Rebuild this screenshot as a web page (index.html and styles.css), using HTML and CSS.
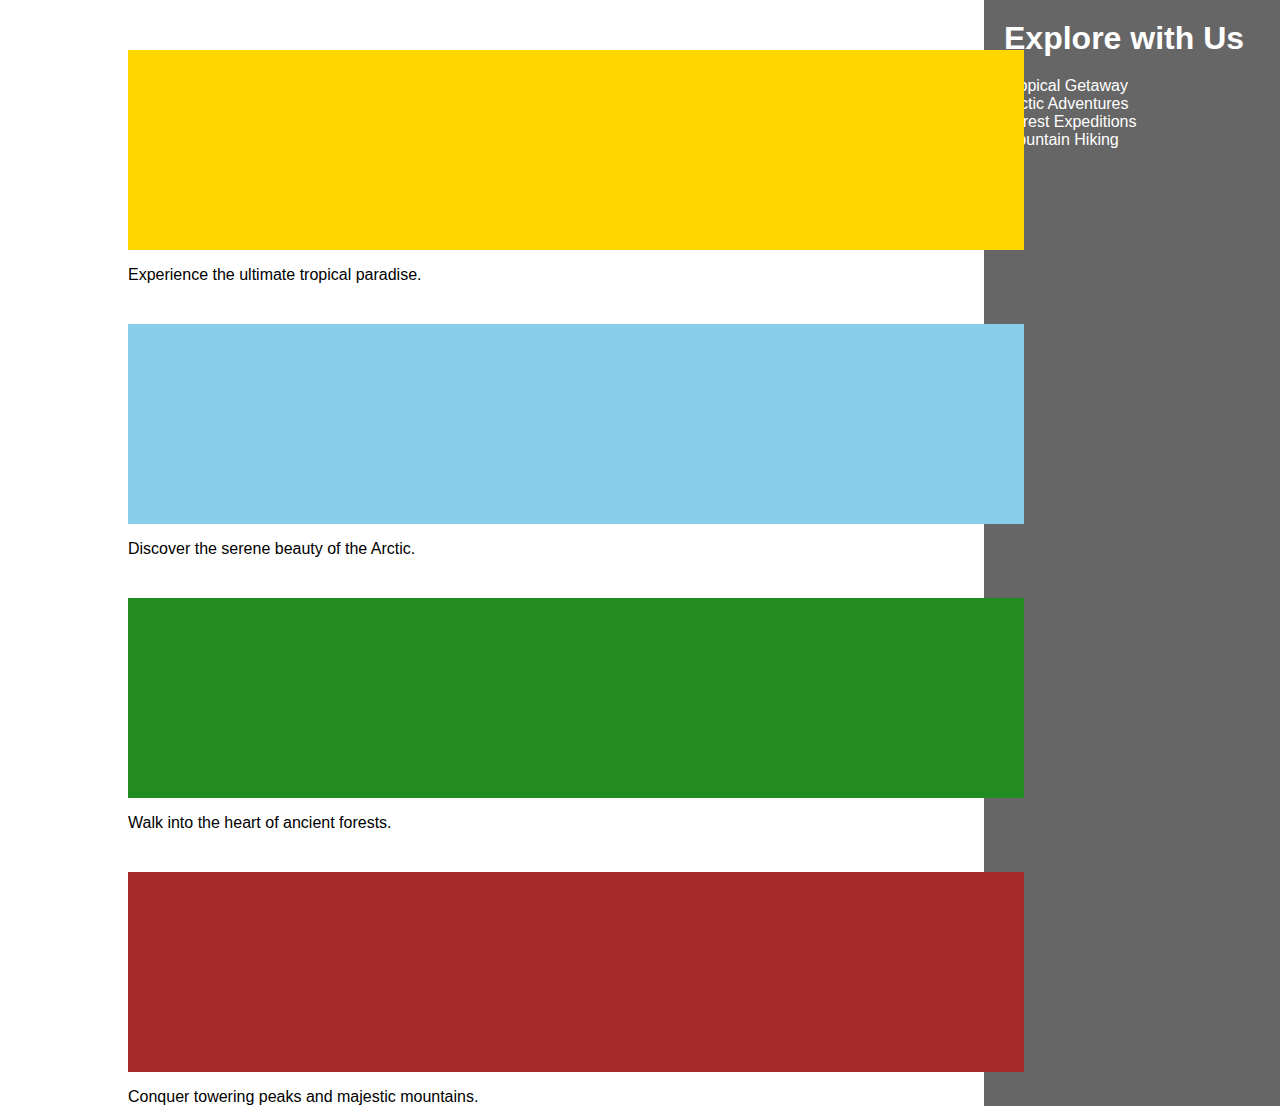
FILE: index.html
```html
<!DOCTYPE html>
<html lang="en">
<head>
<meta charset="utf-8">
<title>Explore with Us</title>
<link rel="stylesheet" href="styles.css">
</head>
<body>
<div class="page">
  <main class="main">
    <section class="dest">
      <div class="banner banner-tropical"></div>
      <p class="caption">Experience the ultimate tropical paradise.</p>
    </section>
    <section class="dest">
      <div class="banner banner-arctic"></div>
      <p class="caption">Discover the serene beauty of the Arctic.</p>
    </section>
    <section class="dest">
      <div class="banner banner-forest"></div>
      <p class="caption">Walk into the heart of ancient forests.</p>
    </section>
    <section class="dest">
      <div class="banner banner-mountain"></div>
      <p class="caption">Conquer towering peaks and majestic mountains.</p>
    </section>
  </main>
  <aside class="sidebar">
    <h2 class="sidebar-title">Explore with Us</h2>
    <ul class="sidebar-list">
      <li>Tropical Getaway</li>
      <li>Arctic Adventures</li>
      <li>Forest Expeditions</li>
      <li>Mountain Hiking</li>
    </ul>
  </aside>
</div>
</body>
</html>
```
FILE: styles.css
```css
html, body {
  margin: 0;
  padding: 0;
}
body {
  font-family: "Liberation Sans", Arial, sans-serif;
  font-size: 16px;
  color: #000;
  background: #fff;
}
.page {
  display: flex;
  align-items: stretch;
  min-height: 1106px;
}
.main {
  flex: 0 0 896px;
  margin-left: 128px;
  padding-top: 50px;
}
.dest {
  margin-bottom: 40px;
}
.banner {
  position: relative;
  height: 200px;
}
.banner-tropical { background: #ffd700; }
.banner-arctic { background: #87ceeb; }
.banner-forest { background: #228b22; }
.banner-mountain { background: #a52a2a; }
.caption {
  margin: 16px 0;
}
.sidebar {
  flex: 0 0 256px;
  margin-left: -40px;
  padding: 20px;
  background: #666666;
  color: #fff;
}
.sidebar-title {
  margin: 0;
  font-size: 32px;
  font-weight: bold;
}
.sidebar-list {
  list-style: none;
  margin: 20px 0;
  padding: 0;
}
```
